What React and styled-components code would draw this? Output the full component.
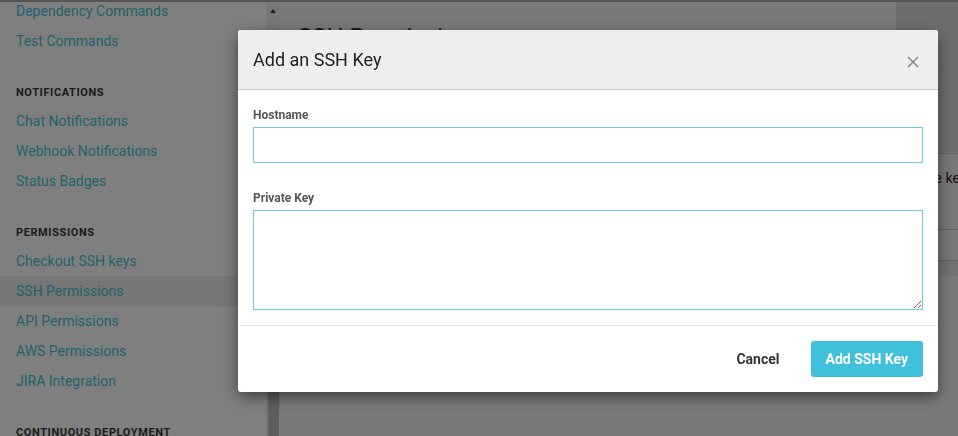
import React from "react";
import styled, { createGlobalStyle } from "styled-components";

const GlobalStyle = createGlobalStyle`
  html, body {
    margin: 0;
    padding: 0;
    height: 100%;
    overflow: hidden;
    font-family: Roboto, "Open Sans", Arial, sans-serif;
  }
  #root {
    height: 100%;
  }
  * {
    box-sizing: border-box;
  }
`;

const sections = [
  { items: ["Dependency Commands", "Test Commands"] },
  {
    title: "Notifications",
    items: ["Chat Notifications", "Webhook Notifications", "Status Badges"],
  },
  {
    title: "Permissions",
    items: [
      "Checkout SSH keys",
      "SSH Permissions",
      "API Permissions",
      "AWS Permissions",
      "JIRA Integration",
    ],
  },
  { title: "Continuous Deployment", items: ["Heroku Deployment"] },
];

const PageLayout = styled.div`
  display: flex;
  height: 436px;
  border-top: 2px solid #aaaaaa;
  background: #f4f4f4;
`;

const Sidebar = styled.nav`
  width: 266px;
  flex-shrink: 0;
  background: #ffffff;
  overflow: hidden;
`;

const SideList = styled.div`
  margin-top: -6px;
`;

const SectionTitle = styled.div`
  margin-top: 20px;
  height: 30px;
  line-height: 30px;
  padding: 2px 0 0 16px;
  font-size: 11px;
  font-weight: 700;
  letter-spacing: 0.6px;
  text-transform: uppercase;
  color: #383838;
`;

const SideLink = styled.a`
  display: block;
  height: 30px;
  line-height: 30px;
  padding-left: 16px;
  font-size: 14px;
  color: #45c3d9;
  text-decoration: none;
  background: ${({ $active }) => ($active ? "#ececec" : "transparent")};
`;

const ScrollTrack = styled.div`
  width: 14px;
  flex-shrink: 0;
  background: #eeeeee;
  display: flex;
  flex-direction: column;
  align-items: center;
  padding-top: 7px;
`;

const ScrollArrow = styled.div`
  width: 0;
  height: 0;
  border-left: 3.5px solid transparent;
  border-right: 3.5px solid transparent;
  border-bottom: 4px solid #444;
`;

const ScrollThumb = styled.div`
  margin-top: auto;
  margin-left: 1px;
  width: 11px;
  height: 140px;
  background: #bdbdbd;
`;

const Main = styled.main`
  flex: 1;
  display: flex;
  flex-direction: column;
  min-width: 0;
  overflow: hidden;
`;

const PageHead = styled.div`
  display: flex;
  height: 151px;
`;

const PageTitle = styled.h1`
  flex: 1;
  margin: 0;
  padding: 21px 0 0 18px;
  font-size: 24px;
  font-weight: 400;
  color: #333;
`;

const HeadAside = styled.div`
  width: 62px;
  background: #dcdcdc;
  display: flex;
  flex-direction: column;
`;

const AsideTop = styled.div`
  height: 67px;
  border-bottom: 1px solid #cfcfcf;
`;

const Panel = styled.section`
  margin-left: 18px;
  border-top: 1px solid #c8c8c8;
  background: #f0f0f0;
`;

const PanelText = styled.p`
  margin: 0;
  height: 75px;
  padding: 14px 12px;
  font-size: 14px;
  line-height: 20px;
  color: #282828;
  white-space: nowrap;
`;

const PanelRow = styled.div`
  height: ${({ $h }) => $h}px;
  border-top: 1px solid #c8c8c8;
  background: ${({ $bg }) => $bg};
`;

const Backdrop = styled.div`
  position: fixed;
  inset: 0;
  background: rgba(0, 0, 0, 0.5);
`;

const ModalWrap = styled.div`
  position: fixed;
  inset: 0;
  padding: 30px 0 0 238px;
`;

const Modal = styled.div`
  width: 700px;
  background: #fff;
  border-radius: 3px;
  box-shadow: 0 5px 15px rgba(0, 0, 0, 0.5);
  overflow: hidden;
`;

const ModalHeader = styled.div`
  display: flex;
  align-items: center;
  justify-content: space-between;
  height: 60px;
  padding: 0 15px;
  background: #eeeeee;
  border-bottom: 1px solid #cccccc;
`;

const ModalTitle = styled.h4`
  margin: 0;
  font-size: 18px;
  font-weight: 400;
  color: #222;
`;

const CloseButton = styled.button`
  display: flex;
  align-items: center;
  justify-content: center;
  width: 22px;
  height: 22px;
  margin: 5px -1px 0 0;
  padding: 0;
  border: none;
  background: none;
  cursor: pointer;
`;

const ModalBody = styled.div`
  padding: 18px 15px 15px;
`;

const FormGroup = styled.div`
  & + & {
    margin-top: 28px;
  }
`;

const Label = styled.label`
  display: block;
  margin-bottom: 5px;
  font-size: 12px;
  line-height: 14px;
  font-weight: 700;
  color: #555;
`;

const fieldStyles = `
  display: block;
  width: 100%;
  border: 1px solid #66d3e4;
  border-radius: 0;
  outline: none;
  background: #fff;
  font-family: Roboto, sans-serif;
  font-size: 14px;
  padding: 6px 10px;
`;

const Input = styled.input`
  ${fieldStyles}
  height: 36px;
`;

const TextArea = styled.textarea`
  ${fieldStyles}
  height: 100px;
  resize: vertical;
`;

const ModalFooter = styled.div`
  display: flex;
  justify-content: flex-end;
  align-items: center;
  gap: 19px;
  padding: 15px;
  border-top: 1px solid #e5e5e5;
`;

const FooterButton = styled.button`
  height: 36px;
  padding: 0 ${({ $primary }) => ($primary ? "15px" : "12px")};
  border: none;
  border-radius: 3px;
  font-family: Roboto, sans-serif;
  font-size: 14px;
  font-weight: 700;
  color: ${({ $primary }) => ($primary ? "#fff" : "#333")};
  background: ${({ $primary }) => ($primary ? "#3fc1db" : "transparent")};
  min-width: ${({ $primary }) => ($primary ? "112px" : "auto")};
  cursor: pointer;
`;

const CloseIcon = () => (
  <svg width="12" height="12" viewBox="0 0 12 12">
    <path
      d="M1 1 L11 11 M11 1 L1 11"
      stroke="#8a8a8a"
      strokeWidth="1.5"
      fill="none"
    />
  </svg>
);

const App = () => {
  return (
    <>
      <GlobalStyle />
      <PageLayout>
        <Sidebar>
          <SideList>
            {sections.map((section, i) => (
              <div key={i}>
                {section.title && <SectionTitle>{section.title}</SectionTitle>}
                {section.items.map((item) => (
                  <SideLink
                    key={item}
                    href="#"
                    $active={item === "SSH Permissions"}
                  >
                    {item}
                  </SideLink>
                ))}
              </div>
            ))}
          </SideList>
        </Sidebar>
        <ScrollTrack>
          <ScrollArrow />
          <ScrollThumb />
        </ScrollTrack>
        <Main>
          <PageHead>
            <PageTitle>SSH Permissions</PageTitle>
            <HeadAside>
              <AsideTop />
            </HeadAside>
          </PageHead>
          <Panel>
            <PanelText>
              Add keys to the build VMs that you need to deploy to your
              machines. If the hostname field is blank, the key will be used
              for all hosts.
            </PanelText>
            <PanelRow $h={31} $bg="#f0f0f0" />
            <PanelRow $h={16} $bg="#e4e4e4" />
          </Panel>
        </Main>
      </PageLayout>

      <Backdrop />
      <ModalWrap>
        <Modal>
          <ModalHeader>
            <ModalTitle>Add an SSH Key</ModalTitle>
            <CloseButton aria-label="Close">
              <CloseIcon />
            </CloseButton>
          </ModalHeader>
          <ModalBody>
            <FormGroup>
              <Label>Hostname</Label>
              <Input type="text" />
            </FormGroup>
            <FormGroup>
              <Label>Private Key</Label>
              <TextArea />
            </FormGroup>
          </ModalBody>
          <ModalFooter>
            <FooterButton>Cancel</FooterButton>
            <FooterButton $primary>Add SSH Key</FooterButton>
          </ModalFooter>
        </Modal>
      </ModalWrap>
    </>
  );
};

export default App;
